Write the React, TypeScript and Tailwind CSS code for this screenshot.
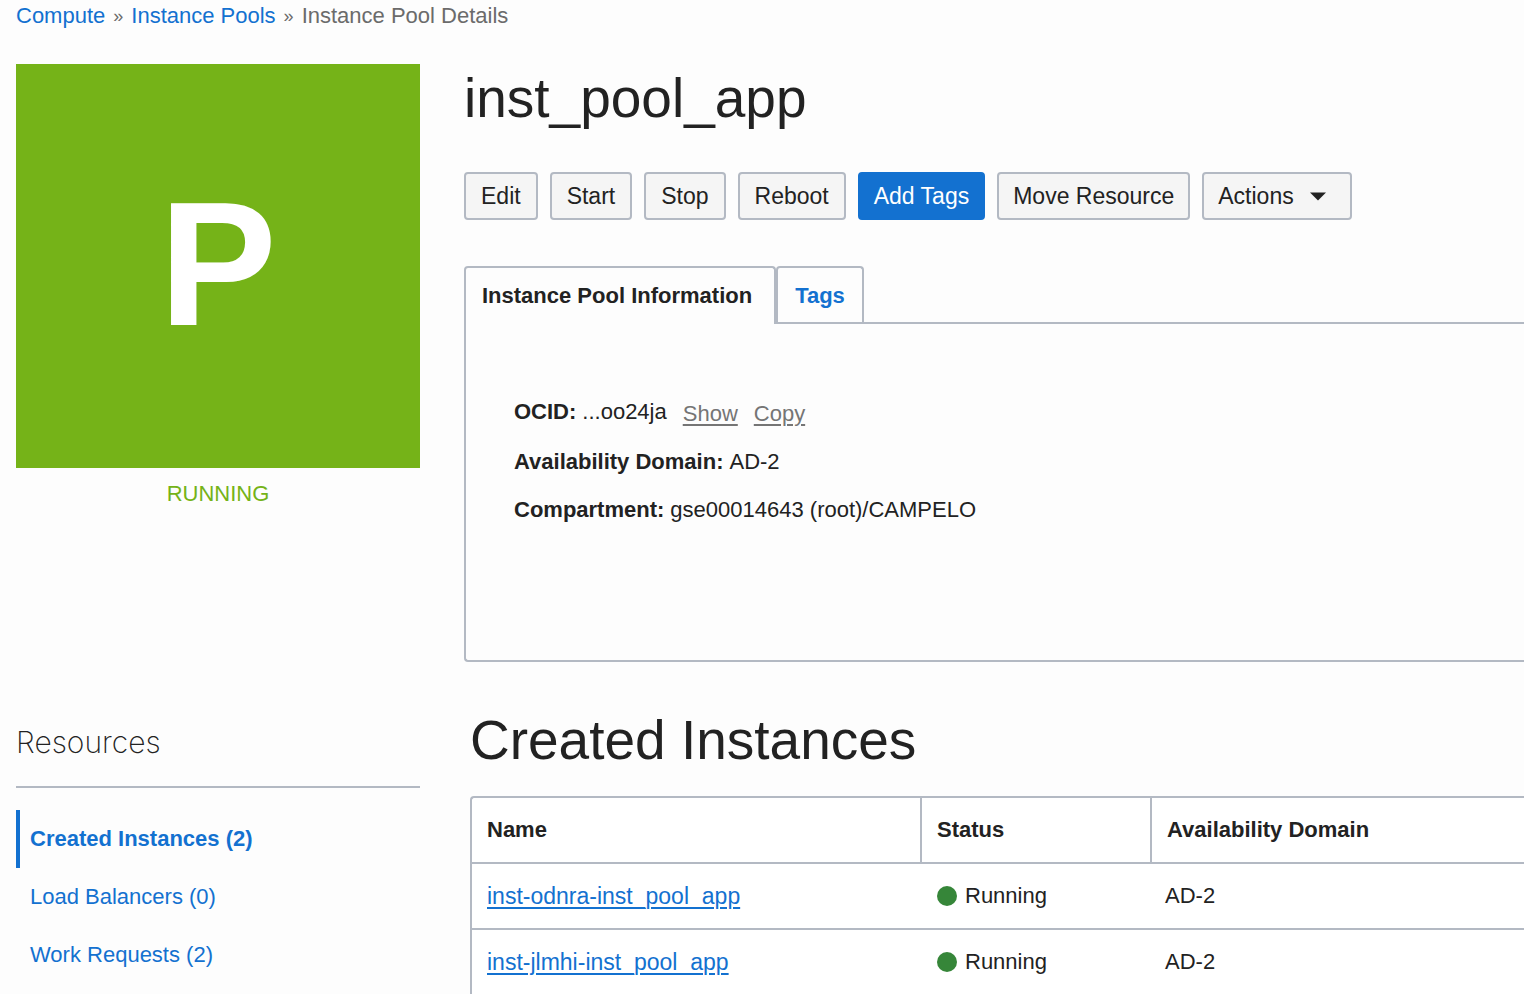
import React from "react";

const actions = [
  { label: "Edit" },
  { label: "Start" },
  { label: "Stop" },
  { label: "Reboot" },
  { label: "Add Tags", primary: true },
  { label: "Move Resource" },
];

const resources = [
  { label: "Created Instances (2)", active: true },
  { label: "Load Balancers (0)" },
  { label: "Work Requests (2)" },
];

const instances = [
  { name: "inst-odnra-inst_pool_app", status: "Running", domain: "AD-2" },
  { name: "inst-jlmhi-inst_pool_app", status: "Running", domain: "AD-2" },
];

const buttonBase = "h-12 rounded-[4px] border-2 text-[23px] leading-[44px] whitespace-nowrap";
const buttonPlain = "border-[#b3b9c3] bg-[#f5f5f5]";
const buttonPrimary = "border-[#1371d0] bg-[#1371d0] text-white";

function Breadcrumb() {
  return (
    <nav aria-label="Breadcrumb" className="mb-8 flex h-8 items-center gap-2 text-[#6b6b6b]">
      <a href="#compute" className="text-[#1371d0]">Compute</a>
      <span className="text-lg">»</span>
      <a href="#pools" className="text-[#1371d0]">Instance Pools</a>
      <span className="text-lg">»</span>
      <span>Instance Pool Details</span>
    </nav>
  );
}

function Sidebar() {
  return (
    <aside className="w-[404px] shrink-0">
      <div className="flex aspect-square items-center justify-center bg-[#75b318] pb-1 text-[176px] leading-none font-bold text-white">
        P
      </div>
      <p className="text-center leading-[52px] text-[#75b318]">RUNNING</p>
      <h2 className="mt-[202px] border-b-2 border-[#b3b9c3] pb-6 font-['Inter',sans-serif] text-[30px] leading-[40px] font-extralight">
        Resources
      </h2>
      <ul className="mt-[22px]">
        {resources.map((r) => (
          <li key={r.label}>
            <a
              href="#resources"
              className={
                r.active
                  ? "block border-l-4 border-[#1371d0] pl-[10px] leading-[58px] font-bold text-[#1371d0]"
                  : "block border-l-4 border-transparent pl-[10px] leading-[58px] text-[#1371d0]"
              }
            >
              {r.label}
            </a>
          </li>
        ))}
      </ul>
    </aside>
  );
}

function PoolInformation() {
  return (
    <section className="mt-[46px]">
      <div role="tablist" className="flex items-end">
        <button
          role="tab"
          aria-selected="true"
          className="relative z-10 -mb-0.5 h-[58px] min-w-[312px] rounded-t-[4px] border-2 border-b-0 border-[#b3b9c3] bg-[#fdfdfd] px-4 text-left font-bold whitespace-nowrap"
        >
          Instance Pool Information
        </button>
        <button
          role="tab"
          aria-selected="false"
          className="h-[56px] min-w-[88px] rounded-t-[4px] border-2 border-b-0 border-[#b3b9c3] px-4 pt-0.5 font-bold text-[#1371d0]"
        >
          Tags
        </button>
      </div>
      <div role="tabpanel" className="min-h-[340px] rounded-bl-[4px] border-2 border-r-0 border-[#b3b9c3] px-12 py-16">
        <dl className="leading-[48px]">
          <div className="flex h-[50px]">
            <dt className="mr-1.5 font-bold">OCID:</dt>
            <dd className="flex gap-4">
              <span>...oo24ja</span>
              <button className="flex pt-0.5 text-[#757575] underline decoration-2 underline-offset-[3px]">Show</button>
              <button className="flex pt-0.5 text-[#757575] underline decoration-2 underline-offset-[3px]">Copy</button>
            </dd>
          </div>
          <div className="flex">
            <dt className="mr-1.5 font-bold">Availability Domain:</dt>
            <dd>AD-2</dd>
          </div>
          <div className="flex">
            <dt className="mr-1.5 font-bold">Compartment:</dt>
            <dd>gse00014643 (root)/CAMPELO</dd>
          </div>
        </dl>
      </div>
    </section>
  );
}

function CreatedInstances() {
  return (
    <section className="mt-11 pl-1.5">
      <h2 className="mb-[22px] text-[55px] leading-[68px]">Created Instances</h2>
      <div className="rounded-tl-[4px] border-2 border-r-0 border-b-0 border-[#b3b9c3] bg-white">
        <table className="w-full table-fixed border-separate border-spacing-0 text-left">
          <thead>
            <tr className="h-[66px]">
              <th className="w-[448px] border-b-2 border-[#b3b9c3] px-[15px]">Name</th>
              <th className="w-[230px] border-b-2 border-l-2 border-[#b3b9c3] px-[15px]">Status</th>
              <th className="border-b-2 border-l-2 border-[#b3b9c3] px-[15px]">Availability Domain</th>
            </tr>
          </thead>
          <tbody>
            {instances.map((i) => (
              <tr key={i.name} className="h-[66px]">
                <td className="border-b-2 border-[#b3b9c3] px-[15px]">
                  <a
                    href="#instance"
                    className="text-[23px] text-[#1371d0] underline decoration-2 underline-offset-[3px]"
                  >
                    {i.name}
                  </a>
                </td>
                <td className="border-b-2 border-[#b3b9c3] px-[17px]">
                  <span className="flex items-center gap-2">
                    <span className="size-5 rounded-full bg-[#368639]" />
                    {i.status}
                  </span>
                </td>
                <td className="border-b-2 border-[#b3b9c3] px-[15px]">{i.domain}</td>
              </tr>
            ))}
          </tbody>
        </table>
      </div>
    </section>
  );
}

export default function App() {
  return (
    <div className="min-h-screen overflow-x-hidden bg-[#fdfdfd] pl-4 font-['Liberation_Sans',Arial,sans-serif] text-[22px] leading-8 text-[#222222]">
      <Breadcrumb />
      <div className="flex gap-11">
        <Sidebar />
        <main className="min-w-0 flex-1">
          <h1 className="text-[55px] leading-[68px]">inst_pool_app</h1>
          <div className="mt-10 flex gap-3">
            {actions.map((a) => (
              <button
                key={a.label}
                className={`${buttonBase} ${a.primary ? buttonPrimary : buttonPlain} ${a.label.includes(" ") ? "px-3.5" : "px-[15px]"}`}
              >
                {a.label}
              </button>
            ))}
            <button aria-haspopup="menu" className={`${buttonBase} ${buttonPlain} flex items-center gap-4 px-3.5`}>
              Actions
              <svg viewBox="0 0 16 9" className="mr-2.5 h-[9px] w-4" fill="currentColor" aria-hidden="true">
                <path d="M0 0.5h16L8 8.5z" />
              </svg>
            </button>
          </div>
          <PoolInformation />
          <CreatedInstances />
        </main>
      </div>
    </div>
  );
}
